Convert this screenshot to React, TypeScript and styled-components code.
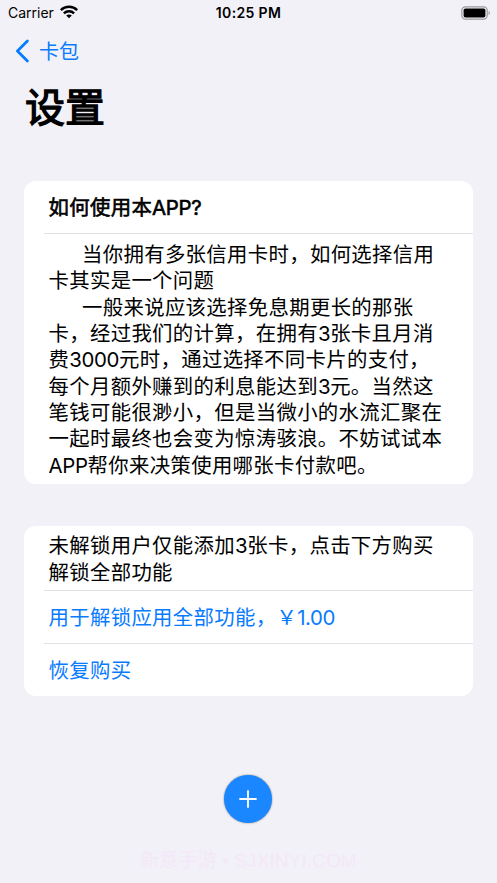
import React from 'react';
import styled, { createGlobalStyle } from 'styled-components';

const Global = createGlobalStyle`
  * { box-sizing: border-box; }
  body { margin: 0; background: #f2f1f7; }
`;

const Screen = styled.main`
  width: 497px;
  height: 883px;
  overflow: hidden;
  display: flex;
  flex-direction: column;
  background: #f2f1f7;
  color: #000;
  font-family: Inter, 'Noto Sans CJK SC', sans-serif;
`;

const StatusBar = styled.header`
  height: 26px;
  flex: none;
  display: grid;
  grid-template-columns: 1fr auto 1fr;
  align-items: center;
  padding: 0 6px 0 8px;
  font-size: 14px;
  line-height: 26px;
`;

const Carrier = styled.div`
  display: flex;
  align-items: center;
  gap: 6px;
  svg { margin-top: -2px; }
`;

const Clock = styled.div`
  font-weight: 600;
  letter-spacing: 0.35px;
  margin-right: 2px;
`;

const Battery = styled.div`
  display: flex;
  justify-content: flex-end;
`;

const NavBar = styled.nav`
  height: 50px;
  flex: none;
  display: flex;
  align-items: center;
  padding-left: 15px;
  gap: 9px;
  color: #087bff;
  font-size: 20px;
  line-height: 50px;
  span { padding-top: 2px; }
`;

const Title = styled.h1`
  margin: 0;
  height: 105px;
  flex: none;
  padding: 2px 0 0 25px;
  font-size: 40px;
  font-weight: 400;
  -webkit-text-stroke: 1.3px #000;
  line-height: 60px;
`;

const Card = styled.section<{ $gap?: number }>`
  margin: 0 24px ${p => p.$gap ?? 0}px 24px;
  flex: none;
  background: #fff;
  border-radius: 12px;
  font-size: 20.4px;
  overflow: hidden;
`;

const Row = styled.div<{ $height: number; $link?: boolean; $divided?: boolean }>`
  height: ${p => p.$height}px;
  margin-left: 20px;
  padding: 3px 0 0 4.5px;
  display: flex;
  flex-direction: column;
  justify-content: center;
  color: ${p => (p.$link ? '#087bff' : '#000')};
  border-top: ${p => (p.$divided ? '1px solid #e2e2e5' : '0')};
`;

const Line = styled.span<{ $indent?: boolean; $medium?: boolean }>`
  display: block;
  height: 26.4px;
  line-height: 26.4px;
  white-space: pre;
  padding-left: ${p => (p.$indent ? 33.5 : 0)}px;
  letter-spacing: 0.33px;
  -webkit-text-stroke: ${p => (p.$medium ? '0.6px #000' : '0')};
`;

const Latin = styled.span`
  letter-spacing: -0.35px;
`;

const Footer = styled.footer`
  display: flex;
  flex-direction: column;
  align-items: center;
  padding-top: 79px;
`;

const AddButton = styled.button`
  width: 48px;
  height: 48px;
  margin-right: 1px;
  padding: 0;
  border: 0;
  border-radius: 50%;
  background: #1a86ff;
  box-shadow: 0 0 2px rgba(0, 0, 0, 0.5);
  display: flex;
  align-items: center;
  justify-content: center;
`;

const Watermark = styled.div`
  margin-top: 24px;
  height: 28px;
  line-height: 28px;
  color: #f4e8f8;
  font-family: 'Liberation Sans', 'Noto Sans CJK SC', sans-serif;
  font-size: 19.2px;
  white-space: nowrap;
`;

const guide: { text: string; indent?: boolean }[] = [
  { text: '当你拥有多张信用卡时，如何选择信用', indent: true },
  { text: '卡其实是一个问题' },
  { text: '一般来说应该选择免息期更长的那张', indent: true },
  { text: '卡，经过我们的计算，在拥有3张卡且月消' },
  { text: '费3000元时，通过选择不同卡片的支付，' },
  { text: '每个月额外赚到的利息能达到3元。当然这' },
  { text: '笔钱可能很渺小，但是当微小的水流汇聚在' },
  { text: '一起时最终也会变为惊涛骇浪。不妨试试本' },
  { text: 'APP帮你来决策使用哪张卡付款吧。' },
];

// Latin letters and digits are tracked tighter than the Chinese text around them.
const TextLine = ({ text, indent, medium }: { text: string; indent?: boolean; medium?: boolean }) => (
  <Line $indent={indent} $medium={medium}>
    {text.split(/([A-Z0-9.?]+)/).map((part, i) => (i % 2 ? <Latin key={i}>{part}</Latin> : part))}
  </Line>
);

const WifiIcon = () => (
  <svg width="18" height="14" viewBox="0 0 18 14" fill="none" stroke="#000" strokeWidth="2.5">
    <path d="M.8 5.1C5.2.6 12.8.6 17.2 5.1" />
    <path d="M3.9 8.3C6.7 5.6 11.3 5.6 14.1 8.3" />
    <path d="M9 13.2 6.2 10.5C7.8 9 10.2 9 11.8 10.5Z" fill="#000" stroke="none" />
  </svg>
);

const BatteryIcon = () => (
  <svg width="30" height="14" viewBox="0 0 30 14">
    <rect x=".8" y=".8" width="25.4" height="12.4" rx="3.6" fill="none" stroke="#99999c" strokeWidth="1.2" />
    <rect x="2.6" y="2.5" width="21.8" height="9" rx="1.8" />
    <path d="M27.6 4.8c1.7.8 1.7 3.6 0 4.4z" fill="#99999c" />
  </svg>
);

export default function App() {
  return (
    <Screen lang="zh-CN">
      <Global />
      <StatusBar>
        <Carrier>Carrier<WifiIcon /></Carrier>
        <Clock>10:25 PM</Clock>
        <Battery><BatteryIcon /></Battery>
      </StatusBar>
      <NavBar>
        <svg width="15" height="24" viewBox="0 0 15 24" fill="none" stroke="#087bff" strokeWidth="2.8" strokeLinecap="round" strokeLinejoin="round">
          <path d="M12.4 2 2.4 12l10 10" />
        </svg>
        <span>卡包</span>
      </NavBar>
      <Title>设置</Title>
      <Card $gap={42}>
        <Row $height={52}><TextLine medium text="如何使用本APP?" /></Row>
        <Row $height={251} $divided>
          {guide.map(l => <TextLine key={l.text} {...l} />)}
        </Row>
      </Card>
      <Card>
        <Row $height={64}>
          <TextLine text="未解锁用户仅能添加3张卡，点击下方购买" />
          <TextLine text="解锁全部功能" />
        </Row>
        <Row $height={53} $link $divided><TextLine text="用于解锁应用全部功能，￥1.00" /></Row>
        <Row $height={53} $link $divided><TextLine text="恢复购买" /></Row>
      </Card>
      <Footer>
        <AddButton aria-label="添加">
          <svg width="18" height="18" viewBox="0 0 18 18" stroke="#fff" strokeWidth="1.8" strokeLinecap="round">
            <path d="M9 1v16M1 9h16" />
          </svg>
        </AddButton>
        <Watermark>新意手游 • SJXINYI.COM</Watermark>
      </Footer>
    </Screen>
  );
}
